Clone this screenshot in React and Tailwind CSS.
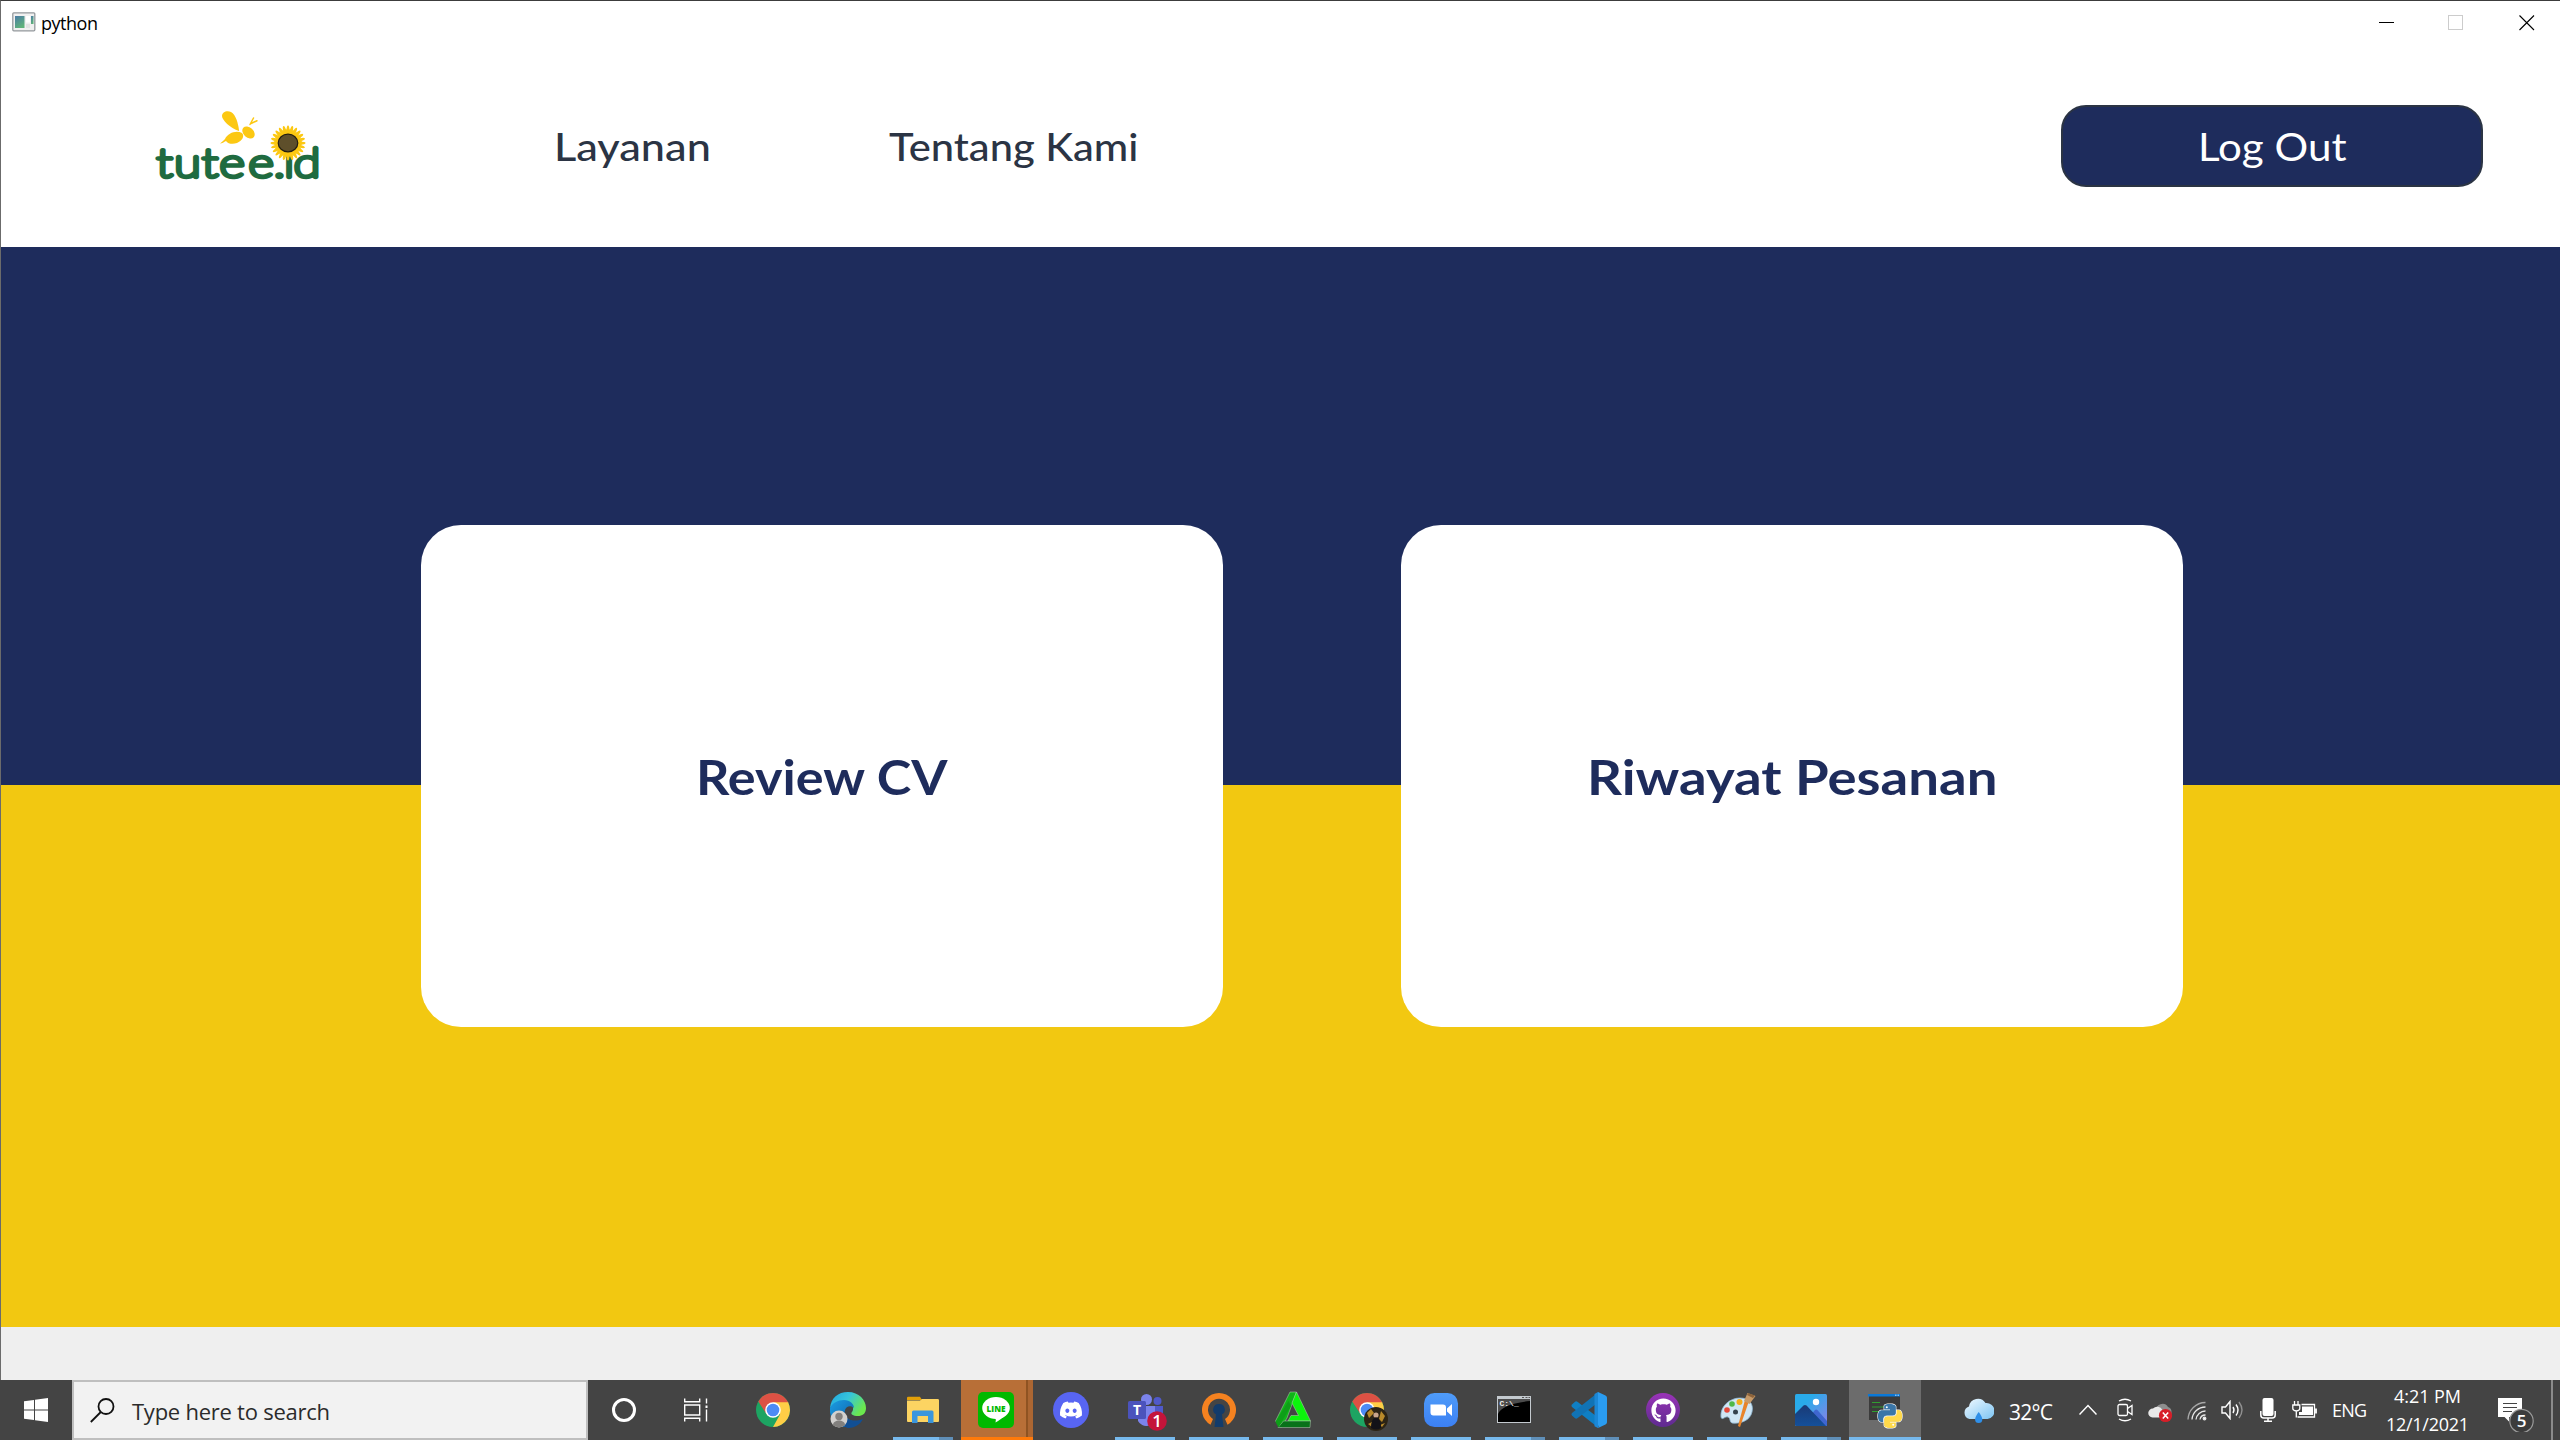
import { useLayoutEffect, useRef, useState } from 'react';
import { FaDiscord, FaGithub } from 'react-icons/fa';

// Spreads its text over a given width by adjusting the letter spacing.
function Fit({ text, width, className = '' }) {
  const ref = useRef(null);
  const [spacing, setSpacing] = useState(0);
  useLayoutEffect(() => {
    const natural = ref.current.getBoundingClientRect().width;
    setSpacing((width - natural) / (text.length - 1));
  }, [text, width]);
  return (
    <span className={`flex justify-start whitespace-nowrap ${className}`} style={{ width }}>
      <span ref={ref} style={{ letterSpacing: `${spacing}px` }}>{text}</span>
    </span>
  );
}

// Widens the letters themselves until the text fills the given width.
function Stretch({ text, width, className = '' }) {
  const ref = useRef(null);
  const [scale, setScale] = useState(1);
  useLayoutEffect(() => {
    setScale(width / ref.current.offsetWidth);
  }, [text, width]);
  return (
    <span className={`flex justify-start whitespace-nowrap ${className}`} style={{ width }}>
      <span ref={ref} className="origin-left" style={{ transform: `scaleX(${scale})` }}>{text}</span>
    </span>
  );
}

function Logo() {
  const petals = Array.from({ length: 24 }, (_, i) => i * 15);
  return (
    <svg width="180" height="80" viewBox="0 0 180 80" className="block shrink-0 overflow-visible">
      <g transform="translate(0 71.500) scale(1.25 1)" className="font-['Lato'] text-[39px] font-thin" fill="#1f6b40" stroke="#1f6b40" strokeWidth="4.300" strokeLinejoin="round" strokeLinecap="round" textAnchor="middle">
        <text x="11.6 30 48 65.6 88.8 103.6 111.2 125.6" y="0">tutee.id</text>
      </g>
      <g fill="#fcc812">
        <path d="M89 26C80 23 72 15 72 11c0-4 5-6 9-4 5 3 7 11 8 18z" />
        <path d="M92 28c3 3 0 8-5 10-4 1.500-9 1-11-2-2 1-4 2.500-6 2.500 1-1 3-2.500 5-4.500 3-6 11-9 17-6z" />
        <ellipse cx="98.500" cy="27.500" rx="7" ry="5" transform="rotate(42 98.500 27.500)" />
        <path d="M100 19.500l3.500-6.500M101 18.500l6-2.800" stroke="#fcc812" strokeWidth="1.500" fill="none" strokeLinecap="round" />
        {petals.map((a) => (
          <ellipse key={a} cx="138" cy="26" rx="1.500" ry="5.500" transform={`rotate(${a} 138 38)`} />
        ))}
        {petals.map((a) => (
          <ellipse key={`b${a}`} cx="138" cy="27.800" rx="0.800" ry="4" transform={`rotate(${a + 7.5} 138 38)`} />
        ))}
      </g>
      <ellipse cx="138" cy="38" rx="9.800" ry="8.800" fill="#5e4f2b" stroke="#221d12" strokeWidth="1.200" />
    </svg>
  );
}

function TitleBar() {
  return (
    <div className="flex h-11 items-start pl-[11px]">
      <svg width="24" height="20" viewBox="0 0 24 20" className="mt-[11px]">
        <defs>
          <linearGradient id="tb" x1="0" y1="0" x2="0.500" y2="1">
            <stop offset="0" stopColor="#4a7ba6" /><stop offset="1" stopColor="#5fb27a" />
          </linearGradient>
        </defs>
        <rect x="0.800" y="0.800" width="22" height="18" rx="1" fill="#f0f0f0" stroke="#93989c" strokeWidth="1.300" />
        <rect x="3" y="4" width="9.500" height="12" fill="url(#tb)" />
        <rect x="14" y="4" width="4" height="6.500" fill="#fff" /><rect x="14" y="12" width="4" height="4" fill="#e2e2e2" />
        <rect x="19" y="4" width="2.500" height="8" fill="url(#tb)" />
      </svg>
      <Fit text="python" width={57} className="ml-[5px] mt-[9px] font-['Open_Sans',sans-serif] text-[18px] leading-[26px] text-black" />
      <svg width="156" height="16" viewBox="0 0 156 16" className="ml-auto mr-[25px] mt-[14px]" fill="none" shapeRendering="crispEdges">
        <path d="M0 7.500H15" stroke="#000" />
        <rect x="69.500" y="0.500" width="14" height="14" stroke="#ccc" />
        <path d="M140.500 0.500l14.500 14.500M155 0.500L140.500 15" stroke="#000" shapeRendering="auto" strokeWidth="1.100" />
      </svg>
    </div>
  );
}

function Nav() {
  return (
    <nav className="flex h-[202px] items-center font-['Lato',sans-serif]">
      <div className="ml-[149px] -mt-[2px]"><Logo /></div>
      <Stretch text="Layanan" width={157} className="ml-[224px] text-[38px] font-medium leading-none text-[#2b3444]" />
      <Stretch text="Tentang Kami" width={249} className="ml-[178px] text-[38px] font-medium leading-none text-[#2b3444]" />
      <button className="ml-auto mr-[77px] flex h-[82px] w-[422px] items-center justify-center rounded-[25px] border-2 border-[#2b3444] bg-[#1e2c5c]">
        <Stretch text="Log Out" width={149} className="text-[39px] font-normal leading-none text-white" />
      </button>
    </nav>
  );
}

const Svg = ({ children }) => (
  <svg width="48" height="48" viewBox="0 0 48 48" className="block">{children}</svg>
);

function ChromeShapes() {
  return (
    <>
      <circle cx="24" cy="24" r="17" fill="#1da462" />
      <path d="M9.300 15.500A17 17 0 0 1 38.700 15.500L39.500 17H24L17.500 28z" fill="#dd5144" />
      <path d="M24 16.200H39.100A17 17 0 0 1 24 41l7-12.500z" fill="#ffcd46" />
      <circle cx="24" cy="24" r="7.800" fill="#fff" />
      <circle cx="24" cy="24" r="6.300" fill="#4c8bf5" />
    </>
  );
}

const Chrome = () => (
  <div className="-ml-[4px]"><Svg><ChromeShapes /></Svg></div>
);

const Edge = () => (
  <div className="-ml-[2px]">
    <Svg>
      <defs>
        <linearGradient id="e1" x1="0" y1="0" x2="1" y2="0.500">
          <stop offset="0" stopColor="#1fa5e0" /><stop offset="0.500" stopColor="#36c5dc" /><stop offset="1" stopColor="#6be84e" />
        </linearGradient>
        <linearGradient id="e2" x1="0" y1="0" x2="1" y2="1">
          <stop offset="0" stopColor="#1b9de2" /><stop offset="1" stopColor="#0c59a4" />
        </linearGradient>
      </defs>
      <path d="M6 22C7 12 14 6 24 6c11 0 18 8 18 16 0 6-4 8-8 8-5 0-8-2-6-4 3-4 0-10-8-10-7 0-12 4-14 6z" fill="url(#e1)" />
      <path d="M6 22c2-5 8-8 14-8 6 0 10 4 10 8-3-3-8-2-9 2-2 7 5 12 12 11-3 4-6 6-10 6C13 41 5 34 6 22z" fill="url(#e2)" />
      <path d="M21 25c-1 8 7 12 18 8-3 6-9 9-15 9-6-1-9-10-3-17z" fill="#114f94" />
      <circle cx="15" cy="33" r="8.500" fill="#d2d0ce" />
      <circle cx="15" cy="30.500" r="3.700" fill="#82807e" />
      <path d="M9 39c0-6 12-6 12 0-3 3-9 3-12 0z" fill="#82807e" />
    </Svg>
  </div>
);

const Explorer = () => (
  <Svg>
    <path d="M8 12q0-1.300 1.300-1.300H21l2 3.300H8z" fill="#e3a008" />
    <path d="M8 14.500H21l2-1.500H38.700q1.300 0 1.300 1.300V35q0 1-1 1H9q-1 0-1-1z" fill="#fcd462" />
    <path d="M13 37V26q0-1.500 1.500-1.500H33q1.500 0 1.500 1.500V37H29V30H18.500v7z" fill="#3a96dd" />
  </Svg>
);

const Line = () => (
  <div className="-ml-[2px]">
    <Svg>
      <rect x="6" y="6" width="36" height="36" rx="5" fill="#00b900" />
      <ellipse cx="24" cy="22" rx="13.800" ry="11" fill="#fff" />
      <path d="M20 30q5 1 3.500 6.500 7-4 10-8z" fill="#fff" />
      <text x="24" y="25.500" textAnchor="middle" textLength="19" lengthAdjust="spacingAndGlyphs" className="font-['Open_Sans'] text-[9.5px] font-extrabold" fill="#00b900">LINE</text>
    </Svg>
  </div>
);

const Discord = () => (
  <span className="flex size-9 items-center justify-center rounded-full bg-[#5865f2]">
    <FaDiscord size={24} color="#fff" />
  </span>
);

const Teams = () => (
  <Svg>
    <circle cx="36.500" cy="15" r="4" fill="#5059c9" />
    <circle cx="25.500" cy="13.500" r="5.500" fill="#7b83eb" />
    <path d="M29 20H42v9q0 6-6 6h-5z" fill="#5059c9" />
    <path d="M17 20H34v11a9 9 0 0 1-17 4z" fill="#7b83eb" />
    <rect x="7" y="15" width="18" height="18" rx="1.500" fill="#4b53bc" />
    <text x="16" y="29" textAnchor="middle" className="font-['Open_Sans'] text-[14px] font-bold" fill="#fff">T</text>
    <circle cx="36" cy="35" r="9.800" fill="#c4143a" />
    <text x="36" y="41" textAnchor="middle" className="font-['Open_Sans'] text-[17px] font-semibold" fill="#fff">1</text>
  </Svg>
);

const OpenVpn = () => (
  <Svg>
    <path d="M15.500 38.700A17 17 0 1 1 32.500 38.700L30 33A11 11 0 1 0 18 33z" fill="#f58220" />
    <path d="M24 18a5.500 5.500 0 0 1 3 10.300L28.500 41h-9L21 28.300A5.500 5.500 0 0 1 24 18z" fill="#123b6b" />
  </Svg>
);

const Triangle = () => (
  <Svg>
    <path d="M21 6h6.500L18 32l-6 9.500L6.500 35z" fill="#10b418" stroke="#b9c9b9" strokeWidth="0.500" />
    <path d="M27.500 6L41.500 35H19l3-5.500h7.500L23 17z" fill="#0cf50c" stroke="#b9c9b9" strokeWidth="0.500" />
    <path d="M41.500 35L41 41.500H9L14.500 35z" fill="#08721a" stroke="#b9c9b9" strokeWidth="0.500" />
    <path d="M6.500 36l3 5.500L22 20l-2.500-5z" fill="#0e9e18" />
  </Svg>
);

const ChromeProfile = () => (
  <Svg>
    <ChromeShapes />
    <circle cx="33" cy="33" r="12" fill="#2c2415" />
    <path d="M24 27l4-4 3 4-5 5zM38 25l4 5-3 6-3-3zM25 38l4-2v5zM37 39l5-2-3 4z" fill="#b98a2a" />
    <circle cx="33" cy="29" r="2.600" fill="#c9a58c" />
    <path d="M28 42q0-10 5-10.500 5 .5 5 10.500-5 3-10 0z" fill="#121218" />
  </Svg>
);

const Zoom = () => (
  <Svg>
    <defs>
      <linearGradient id="zm" x1="0" y1="0" x2="0" y2="1"><stop offset="0" stopColor="#4f9cf9" /><stop offset="1" stopColor="#3c80f3" /></linearGradient>
    </defs>
    <rect x="7" y="7" width="34" height="34" rx="10.500" fill="url(#zm)" />
    <path d="M13.500 18.500H26q3 0 3 3v8H16.500q-3 0-3-3zM30 22.500l5-4.500v12l-5-4.500z" fill="#fff" />
  </Svg>
);

const Cmd = () => (
  <div className="-ml-[2px]">
    <Svg>
      <rect x="7" y="10" width="34" height="27" fill="#c4cacf" />
      <rect x="8" y="13" width="32" height="23" fill="#000" />
      <path d="M8 13H40v2Q12 18 8 28z" fill="#4c4c4c" />
      <path d="M32 11.500h2M35.500 11.500h2M38.500 11.500h1.500" stroke="#555" />
      <text x="9.500" y="20" className="font-['Liberation_Mono'] text-[8px] font-bold" fill="#eee">C:\_</text>
    </Svg>
  </div>
);

const VsCode = () => (
  <Svg>
    <path d="M7 18.500l3-2.800q1.200-.8 2.400 0L33 31.500V41.500L7 21q-1.200-1.200 0-2.500z" fill="#0f7fc4" />
    <path d="M7 29.500l3 2.800q1.200.8 2.400 0L33 16.500V6.500L7 27q-1.200 1.200 0 2.500z" fill="#1173b5" />
    <path d="M33 6l7.500 3.500q1.500.8 1.500 2.300v24.400q0 1.500-1.500 2.300L33 42q1-1 0-3z" fill="#2a9cf0" />
    <path d="M33 6v36l-3.500-1.800V8z" fill="#1c87d6" />
  </Svg>
);

const GitHub = () => (
  <span className="flex size-[34px] items-center justify-center rounded-full bg-linear-to-b from-[#9a33b8] to-[#5e2b8f]">
    <FaGithub size={25} color="#fff" />
  </span>
);

const Paint = () => (
  <Svg>
    <path d="M8 31C7 20 17 12 27 12c9 0 14 6 12 14-2 9-12 12-20 11-3-1-1-5-4-6-3-1-6 4-7 0z" fill="#cfe6f5" stroke="#8fb8d3" strokeWidth="0.800" />
    <circle cx="22.500" cy="26" r="2.500" fill="#34424d" />
    <circle cx="14" cy="24" r="2.800" fill="#e5493a" />
    <circle cx="19" cy="18" r="2.800" fill="#4fb94a" />
    <circle cx="26.500" cy="16" r="3" fill="#f5ae1c" />
    <path d="M36 15l-9 26-2-1 7-26z" fill="#e8842a" />
    <path d="M31 15l3.500-8 8 3-6 8z" fill="#c79a68" />
    <path d="M35 7l7 2.500-2 2.500-6-3z" fill="#8d643c" />
  </Svg>
);

const Photos = () => (
  <Svg>
    <defs>
      <linearGradient id="ph" x1="0" y1="0" x2="1" y2="1"><stop offset="0.300" stopColor="#29abea" /><stop offset="1" stopColor="#8d7fe6" /></linearGradient>
      <linearGradient id="pm" x1="0" y1="0" x2="0" y2="1"><stop offset="0" stopColor="#1a3a76" /><stop offset="1" stopColor="#14509a" /></linearGradient>
    </defs>
    <rect x="8" y="8" width="32" height="32" rx="1.500" fill="url(#ph)" />
    <path d="M24 29l4-5q1.200-1.200 2.400 0L40 35v5H28z" fill="#3f66cf" />
    <path d="M8 28l8.500-8.500q1.500-1 3 0L39 40H9.500Q8 40 8 38.500z" fill="url(#pm)" />
    <circle cx="29" cy="16" r="3.200" fill="#fff" />
  </Svg>
);

const PY =
  'M14.25.18l.9.2.73.26.59.3.45.32.34.34.25.34.16.33.1.3.04.26.02.2-.01.13V8.500l-.05.63-.13.55-.21.46-.26.38-.3.31-.33.25-.35.19-.35.14-.33.1-.3.07-.26.04-.21.02H8.770l-.69.05-.59.14-.5.22-.41.27-.33.32-.27.35-.2.36-.15.37-.1.35-.07.32-.04.27-.02.21v3.060H3.170l-.21-.03-.28-.07-.32-.12-.35-.18-.36-.26-.36-.36-.35-.46-.32-.59-.28-.73-.21-.88-.14-1.050-.05-1.230.06-1.220.16-1.040.24-.87.32-.71.36-.57.4-.44.42-.33.42-.24.4-.16.36-.1.32-.05.24-.01h.16l.06.01h8.160v-.83H6.180l-.01-2.750-.02-.37.05-.34.11-.31.17-.28.25-.26.31-.23.38-.2.44-.18.51-.15.58-.12.64-.1.71-.06.77-.04.84-.02 1.270.05z';

const Python = () => (
  <Svg>
    <rect x="8" y="8" width="31" height="26" fill="#3b3b3b" />
    <rect x="7" y="8" width="32" height="2.500" fill="#0a78d7" />
    <path d="M34 9.200h1.500M36.500 9.200h1.500" stroke="#bfe0ff" />
    <path d="M11 16.500h8M11 21h12M11 25.500h10" stroke="#2f9e2f" strokeWidth="1.200" />
    <g transform="translate(17 18)">
      <path d={PY} fill="#3a76a8" stroke="#fff" strokeWidth="1.200" paintOrder="stroke" />
      <path d={PY} fill="#ffd94a" stroke="#fff" strokeWidth="1.200" paintOrder="stroke" transform="rotate(180 12 12)" />
      <circle cx="8.800" cy="3.200" r="1" fill="#fff" />
      <circle cx="15.200" cy="20.800" r="1" fill="#fff" />
    </g>
  </Svg>
);

const apps = [
  { Icon: Chrome },
  { Icon: Edge },
  { Icon: Explorer, state: 'group' },
  { Icon: Line, state: 'alert' },
  { Icon: Discord },
  { Icon: Teams, state: 'open' },
  { Icon: OpenVpn, state: 'open' },
  { Icon: Triangle, state: 'open' },
  { Icon: ChromeProfile, state: 'open' },
  { Icon: Zoom, state: 'open' },
  { Icon: Cmd, state: 'group' },
  { Icon: VsCode, state: 'group' },
  { Icon: GitHub, state: 'open' },
  { Icon: Paint, state: 'open' },
  { Icon: Photos, state: 'group' },
  { Icon: Python, state: 'active' },
];

function AppButton({ Icon, state }) {
  const bg =
    state === 'alert'
      ? 'bg-[linear-gradient(to_right,#b86f37_65px,#8f5322_65px,#8f5322_67px,#ab6632_67px)]'
      : state === 'active' ? 'bg-[#6c6c6c]' : '';
  return (
    <div className={`flex h-[60px] w-[72px] flex-col items-center ${bg}`}>
      <div className="flex h-[57px] items-center pt-[3px]"><Icon /></div>
      {state === 'open' && <div className="h-[3px] w-[60px] bg-[#76b9ed]" />}
      {state === 'group' && (
        <div className="flex h-[3px] w-[60px]">
          <div className="w-[46px] bg-[#76b9ed]" /><div className="flex-1 bg-[#5f8fb8]" />
        </div>
      )}
      {state === 'alert' && <div className="h-[3px] w-full bg-[#ff7a0a]" />}
      {state === 'active' && <div className="h-[3px] w-full bg-[#76b9ed]" />}
    </div>
  );
}

function Tray() {
  return (
    <div className="ml-[42px] flex h-full items-center text-white">
      <svg width="31" height="26" viewBox="0 0 31 26" className="mt-px">
        <defs>
          <linearGradient id="cl" x1="0" y1="0" x2="1" y2="1"><stop offset="0" stopColor="#f2faff" /><stop offset="1" stopColor="#7cc4f3" /></linearGradient>
        </defs>
        <path d="M6.500 21a6.500 6.500 0 0 1-.5-12.500A9 9 0 0 1 22.500 5a8 8 0 0 1 2 16z" fill="url(#cl)" />
        <path d="M15.700 14q3.600 4.600 3.600 7.500a3.600 3.600 0 0 1-7.200 0q0-3 3.600-7.500z" fill="#2f8fe8" />
      </svg>
      <Fit text="32°C" width={44} className="ml-[15px] mt-[4px] text-[21px] leading-none" />
      <svg width="18" height="12" viewBox="0 0 18 12" className="ml-[26px]" fill="none" stroke="#fff" strokeWidth="1.500"><path d="M.5 10.500L9 1.500l8.500 9" /></svg>
      <svg width="16" height="24" viewBox="0 0 16 24" className="ml-5" fill="none" stroke="#fff" strokeWidth="1.300">
        <rect x="1" y="6.500" width="9.500" height="11" rx="1.500" />
        <path d="M10.500 10.500l4.500-3v9l-4.500-3M2 3q6-3.500 12 0M2 21q6 3.500 12 0" />
      </svg>
      <svg width="25" height="24" viewBox="0 0 25 24" className="ml-[15px] mt-1">
        <path d="M8 11a6.500 6.500 0 0 1 12-4q3.500 1 3.500 5v5H10z" fill="#8e8e8e" />
        <path d="M4.500 17.500a4.500 4.500 0 0 1 .5-9 6 6 0 0 1 9.500 1.500l2 7.500z" fill="#e8e8e8" />
        <circle cx="17.500" cy="15.500" r="6.600" fill="#d71e28" />
        <path d="M14.800 12.500l5.400 6M20.200 12.500l-5.400 6" stroke="#fff" strokeWidth="1.500" />
      </svg>
      <svg width="20" height="20" viewBox="0 0 20 20" className="ml-[14px] mt-[2px]" fill="none" stroke="#e8e8e8" strokeWidth="1.300">
        <path d="M1 18.500A17.500 17.500 0 0 1 18.500 1.500" stroke="#a8a8a8" />
        <path d="M5 18.500A13.500 13.500 0 0 1 18.500 6M9 18.500A9.500 9.500 0 0 1 18.500 10M13 18.500a5.500 5.500 0 0 1 5.500-4.500" />
        <circle cx="17.500" cy="17.500" r="1.300" fill="#fff" />
      </svg>
      <svg width="23" height="20" viewBox="0 0 23 20" className="ml-[14px]" fill="none" stroke="#fff" strokeWidth="1.400">
        <path d="M1 7h3.500L9 1.500v17L4.500 13H1z" /><path d="M12 7q2 3 0 6M15 4.500q4 5.500 0 11" /><path d="M18 2q6 8 0 16" stroke="#909090" />
      </svg>
      <svg width="16" height="24" viewBox="0 0 16 24" className="ml-4" fill="none" stroke="#fff" strokeWidth="1.500">
        <rect x="2.500" y="0" width="11" height="18" rx="2" fill="#fff" stroke="none" />
        <path d="M.8 13v4q0 3 3 3h8.400q3 0 3-3v-4M8 20v3M4 23.200h8" />
      </svg>
      <svg width="25" height="18" viewBox="0 0 25 18" className="ml-[16px] -mt-px" fill="none" stroke="#fff" strokeWidth="1.300">
        <path d="M2.500 0v4M6 0v4M.8 4h7v3.500q0 2-3.500 2.500Q.8 9.500.8 7.500zM4.300 10v6.500" />
        <path d="M9.500 3.500H22.500V16H5.500" /><path d="M7 11h3V5.500H21V14H7z" fill="#fff" stroke="none" /><path d="M24 7.500v5" strokeWidth="1.800" />
      </svg>
      <Fit text="ENG" width={35} className="ml-[15px] -mt-px text-[18px] leading-none" />
      <div className="ml-[19px] flex w-[83px] flex-col items-center text-[18px] leading-[28px]">
        <Fit text="4:21 PM" width={67} />
        <Fit text="12/1/2021" width={83} />
      </div>
      <svg width="38" height="44" viewBox="0 0 38 44" className="ml-[29px]">
        <path d="M0 10H24V29H11v4.500L6.500 29H0z" fill="#fff" />
        <path d="M5 15.500h14M5 19.500h14M5 23.500h9" stroke="#444" strokeWidth="1.200" />
        <circle cx="23.500" cy="33.500" r="11.700" fill="#3c3c3c" stroke="#9a9a9a" strokeWidth="1.200" transform="translate(0 -.5)" />
        <text x="23.500" y="39" textAnchor="middle" className="font-['Open_Sans'] text-[17px] font-semibold" fill="#fff">5</text>
      </svg>
      <div className="ml-[15px] h-full w-[2px] bg-[#8c8c8c]" />
    </div>
  );
}

function Taskbar() {
  return (
    <footer className="flex h-[60px] items-center bg-[#444444] font-['Open_Sans',sans-serif]">
      <div className="flex w-[72px] justify-center">
        <svg width="24" height="24" viewBox="0 0 24 24" fill="#fff"><path d="M0 3.300L10 2v9.500H0zM11 1.800L24 0v11.500H11zM0 12.500H10V22L0 20.700zM11 12.500H24V24L11 22.200z" /></svg>
      </div>
      <div className="flex h-full w-[516px] items-center border-2 border-[#bfbfbf] bg-[#f2f2f2] pl-4">
        <svg width="25" height="25" viewBox="0 0 25 25" fill="none" stroke="#111" strokeWidth="1.800"><circle cx="16" cy="8.500" r="7.500" /><path d="M10.800 14L.8 24" /></svg>
        <Fit text="Type here to search" width={198} className="ml-[17px] mt-[1px] text-[22px] leading-none text-[#2b2b2b]" />
      </div>
      <div className="flex w-[72px] justify-center"><span className="size-6 rounded-full border-[3px] border-white" /></div>
      <div className="flex w-[72px] justify-center">
        <svg width="24" height="24" viewBox="0 0 24 24" fill="none" stroke="#fff" strokeWidth="1.400">
          <path d="M.7.500v3.300h15V.500M.7 7h15v10H.7zM.7 23.500v-3.300h15v3.300M22.500.500v5M22.500 11.500v12" /><rect x="21.500" y="7.500" width="2" height="2.500" fill="#fff" stroke="none" />
        </svg>
      </div>
      <div className="ml-[7px] flex gap-[2px]">
        {apps.map(({ Icon, state }, i) => <AppButton key={i} Icon={Icon} state={state} />)}
      </div>
      <Tray />
    </footer>
  );
}

export default function App() {
  return (
    <div className="flex h-[1440px] w-[2560px] flex-col overflow-hidden bg-white">
      <div className="flex h-[1380px] flex-col border-l border-t border-l-[#6b6b6b] border-t-[#3c3c3c] bg-[#efefef]">
        <header className="h-[246px] bg-white"><TitleBar /><Nav /></header>
        <main className="flex h-[1080px] items-start gap-[178px] bg-[linear-gradient(to_bottom,#1e2c5c_538px,#f2c811_538px)] pl-[420px] pt-[278px] font-['Lato',sans-serif] text-[47px] font-bold leading-none text-[#1e2c5c]">
          <section className="flex h-[502px] w-[802px] items-center justify-center rounded-[40px] bg-white">
            <Stretch text="Review CV" width={252} className="pt-[2px]" />
          </section>
          <section className="flex h-[502px] w-[782px] items-center justify-center rounded-[40px] bg-white">
            <Stretch text="Riwayat Pesanan" width={411} className="pt-[2px]" />
          </section>
        </main>
      </div>
      <Taskbar />
    </div>
  );
}
